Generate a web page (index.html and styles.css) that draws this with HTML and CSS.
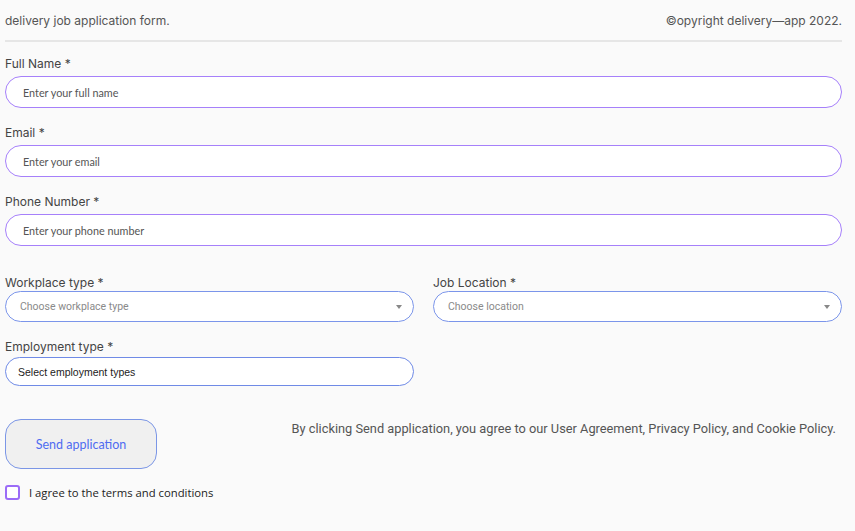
FILE: index.html
```html
<!DOCTYPE html>
<html lang="en">
<head>
<meta charset="utf-8">
<title>delivery job application form</title>
<link rel="stylesheet" href="styles.css">
</head>
<body>
<div class="page">
  <header class="topbar">
    <span class="title">delivery job application form.</span>
    <span class="copy">©opyright delivery—app 2022.</span>
  </header>

  <form class="form">
    <div class="field">
      <label class="label">Full Name *</label>
      <input class="text-input" type="text" placeholder="Enter your full name">
    </div>
    <div class="field">
      <label class="label">Email *</label>
      <input class="text-input" type="email" placeholder="Enter your email">
    </div>
    <div class="field">
      <label class="label">Phone Number *</label>
      <input class="text-input" type="tel" placeholder="Enter your phone number">
    </div>

    <div class="row first-row">
      <div class="field half">
        <label class="label">Workplace type *</label>
        <div class="select">
          <span class="select-text">Choose workplace type</span>
          <span class="caret"></span>
        </div>
      </div>
      <div class="field half">
        <label class="label">Job Location *</label>
        <div class="select">
          <span class="select-text">Choose location</span>
          <span class="caret"></span>
        </div>
      </div>
    </div>

    <div class="row second-row">
      <div class="field half">
        <label class="label">Employment type *</label>
        <div class="multi">Select employment types</div>
      </div>
    </div>

    <div class="actions">
      <button class="send" type="button">Send application</button>
      <p class="legal">By clicking Send application, you agree to our User Agreement, Privacy Policy, and Cookie Policy.</p>
    </div>

    <label class="agree">
      <span class="box"></span>
      <span class="agree-text">I agree to the terms and conditions</span>
    </label>
  </form>
</div>
</body>
</html>
```

FILE: styles.css
```css
html, body {
  margin: 0;
  padding: 0;
  background: #fafafa;
}
body {
  font-family: Inter, "Noto Sans", sans-serif;
  color: #444;
}
.page {
  width: 837px;
  margin-left: 5px;
}
.topbar {
  display: flex;
  justify-content: space-between;
  align-items: center;
  height: 40px;
  border-bottom: 2px solid #e6e6e6;
  font-size: 12px;
  color: #555;
}
.title, .copy {
  line-height: 16px;
  margin-top: 1px;
}
.form {
  display: flex;
  flex-direction: column;
  padding-top: 14px;
}
.field {
  display: flex;
  flex-direction: column;
  margin-bottom: 17px;
}
.label {
  font-size: 12px;
  line-height: 16px;
  color: #444;
  margin-bottom: 4px;
}
.text-input {
  box-sizing: border-box;
  height: 32px;
  width: 100%;
  border: 1px solid #a680fa;
  border-radius: 16px;
  background: #fff;
  padding: 0 0 0 17px;
  font-family: Lato, sans-serif;
  font-size: 10.8px;
  color: #444;
  outline: none;
}
.text-input::placeholder {
  color: #555;
}
.row {
  display: flex;
  gap: 19px;
}
.half {
  width: 409px;
  flex: 0 0 409px;
}
.first-row { margin-top: 12px; }
.first-row .field { margin-bottom: 17px; }
.first-row .label { margin-bottom: 0; }
.select {
  box-sizing: border-box;
  height: 31px;
  border: 1px solid #7b95ea;
  border-radius: 16px;
  background: #fff;
  display: flex;
  align-items: center;
  justify-content: space-between;
  padding: 0 11px 0 14px;
}
.select-text {
  font-family: Roboto, sans-serif;
  font-size: 10.5px;
  color: #8a8a8a;
}
.caret {
  width: 0;
  height: 0;
  border-left: 3px solid transparent;
  border-right: 3px solid transparent;
  border-top: 4px solid #888;
}
.second-row .field { margin-bottom: 0; }
.second-row .label { margin-bottom: 2px; }
.multi {
  box-sizing: border-box;
  height: 29px;
  border: 1px solid #6f8ae6;
  border-radius: 15px;
  background: #fff;
  display: flex;
  align-items: center;
  padding-left: 12px;
  font-family: "Liberation Sans", Arial, sans-serif;
  font-size: 10.5px;
  color: #222;
}
.actions {
  display: flex;
  justify-content: space-between;
  align-items: flex-start;
  margin-top: 33px;
}
.send {
  box-sizing: border-box;
  width: 152px;
  height: 50px;
  border: 1px solid #7b96e6;
  border-radius: 16px;
  background: #f0f0f0;
  color: #4f6cf0;
  font-family: Lato, sans-serif;
  font-size: 12.5px;
  padding: 0;
}
.legal {
  margin: 2px 6px 0 0;
  font-family: Roboto, sans-serif;
  font-size: 12.8px;
  line-height: 16px;
  color: #555;
}
.agree {
  display: flex;
  align-items: center;
  gap: 9px;
  margin-top: 16px;
}
.box {
  box-sizing: border-box;
  width: 15px;
  height: 15px;
  border: 2px solid #9b6cf7;
  border-radius: 3px;
  background: #fff;
}
.agree-text {
  font-family: "Open Sans", sans-serif;
  font-size: 11.3px;
  color: #222;
}
```
